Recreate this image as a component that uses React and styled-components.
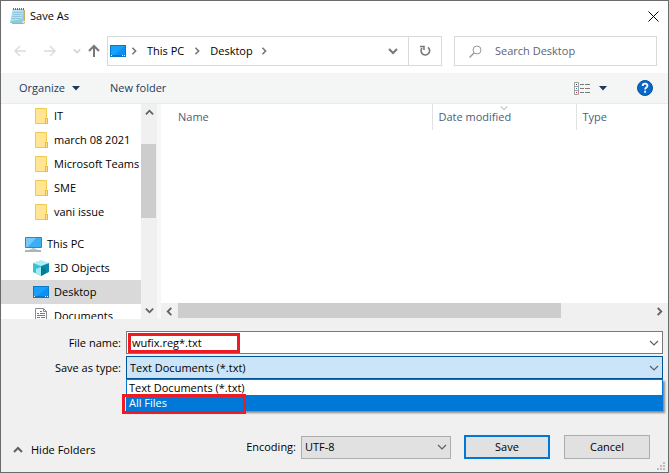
import React, { useState } from "react";
import styled, { createGlobalStyle, css } from "styled-components";

const GlobalStyle = createGlobalStyle`
  *, *::before, *::after { box-sizing: border-box; }
  body { margin: 0; }
  body, button, input, select, table {
    font-family: "Open Sans", "Noto Sans", sans-serif;
    font-size: 11px;
    line-height: 16px;
    color: #000;
  }
  button, input, select { margin: 0; padding: 0; border-radius: 0; }
  svg { flex: none; }
`;

const Dialog = styled.main`
  display: flex;
  flex-direction: column;
  height: 100vh;
  overflow: hidden;
  border: 1px solid #6b6b6b;
  background: #fff;
`;

const TitleBar = styled.header`
  display: flex;
  align-items: center;
  height: 30px;
  padding: 0 9px;
  gap: 4px;
`;

const Title = styled.h1`
  flex: 1;
  margin: 0;
  font-size: 11px;
  font-weight: 400;
`;

const IconButton = styled.button`
  display: flex;
  align-items: center;
  justify-content: center;
  flex: none;
  width: ${(p) => p.$width || 16}px;
  height: ${(p) => p.$height || 16}px;
  border: 0;
  background: transparent;
`;

const NavBar = styled.nav`
  display: flex;
  align-items: center;
  height: 42px;
  padding: 0 11px 2px 12px;
`;

const History = styled.div`
  display: flex;
  align-items: center;
  flex: none;
  width: 94px;
`;

const AddressBar = styled.div`
  display: flex;
  align-items: center;
  flex: 1;
  height: 30px;
  margin-right: 12px;
  padding-left: 2px;
  border: 1px solid #d9d9d9;
`;

const Crumb = styled.a`
  margin: 0 5px;
  color: #000;
  text-decoration: none;
  white-space: nowrap;
`;

const Spacer = styled.span`
  flex: 1;
`;

const Refresh = styled(IconButton)`
  border-left: 1px solid #d9d9d9;
`;

const SearchBox = styled.label`
  display: flex;
  align-items: center;
  flex: 0 1 203px;
  height: 30px;
  gap: 13px;
  padding-left: 14px;
  border: 1px solid #d9d9d9;
`;

const SearchInput = styled.input`
  flex: 1;
  min-width: 0;
  border: 0;
  outline: 0;
  background: transparent;
  &::placeholder { color: #5c6470; opacity: 1; }
`;

const Toolbar = styled.div`
  display: flex;
  align-items: center;
  height: 31px;
  padding: 0 15px 0 18px;
  border-bottom: 1px solid #e8eaeb;
  background: #f4f6f6;
`;

const ToolButton = styled.button`
  display: flex;
  align-items: center;
  gap: 7px;
  margin-right: 30px;
  border: 0;
  background: transparent;
  color: #1e395b;
`;

const HelpButton = styled(IconButton)`
  margin-left: 21px;
`;

const Browser = styled.section`
  display: grid;
  grid-template-columns: 140px 16px 1fr;
  flex: 1;
  min-height: 0;
`;

const Tree = styled.ul`
  margin: 0;
  padding: 0;
  overflow: hidden;
  list-style: none;
`;

const TreeItem = styled.li`
  display: flex;
  align-items: center;
  height: 24px;
  gap: 5px;
  margin-top: ${(p) => (p.$root ? 8 : 0)}px;
  padding-left: ${(p) => (p.$root ? 24 : 32)}px;
  background: ${(p) => (p.$selected ? "#d9d9d9" : "transparent")};
  white-space: nowrap;
`;

const ScrollBar = styled.div`
  display: flex;
  flex-direction: ${(p) => (p.$vertical ? "column" : "row")};
  min-height: 0;
  background: #f0f0f0;
`;

const Track = styled.div`
  display: flex;
  flex-direction: column;
  flex: 1;
  min-height: 0;
`;

const Thumb = styled.div`
  background: #cdcdcd;
  ${(p) =>
    p.$vertical
      ? css`width: 15px; height: 74px; margin-top: 23px;`
      : css`width: 81%; height: 15px;`}
`;

const Files = styled.div`
  display: flex;
  flex-direction: column;
  min-width: 0;
  border-left: 4px solid #f7f7f7;
`;

const FileTable = styled.table`
  width: 100%;
  table-layout: fixed;
  border-collapse: collapse;
`;

const Column = styled.th`
  position: relative;
  width: ${(p) => p.$width || "auto"};
  height: 26px;
  padding: 0 0 0 ${(p) => (p.$first ? 17 : 6)}px;
  border-right: ${(p) => (p.$last ? 0 : 1)}px solid #e2e2e2;
  color: #4c607a;
  font-weight: 400;
  text-align: left;
`;

const SortMark = styled.span`
  position: absolute;
  top: 0;
  left: 0;
  right: 0;
  display: flex;
  justify-content: center;
`;

const Footer = styled.form`
  position: relative;
  padding: 12px 5px 13px 1px;
  background: #f0f0f0;
`;

const Field = styled.div`
  display: grid;
  grid-template-columns: 119px 1fr;
  align-items: center;
  column-gap: 5px;
  margin-bottom: 2px;
`;

const FieldLabel = styled.label`
  text-align: right;
  white-space: nowrap;
`;

const Combo = styled.div`
  position: relative;
  display: grid;
  align-items: center;
  height: 23px;
  width: ${(p) => p.$width || "auto"};
  border: 1px solid ${(p) => p.$border};
  background: ${(p) => p.$fill};
  & > * { grid-area: 1 / 1; }
  & > svg { justify-self: end; margin-right: 3px; pointer-events: none; }
`;

const controlStyle = css`
  width: 100%;
  height: 21px;
  padding: 0 20px 0 ${(p) => p.$inset || 3}px;
  border: 0;
  outline: 0;
  appearance: none;
  background: transparent;
`;

const TextInput = styled.input`
  ${controlStyle}
`;

const Select = styled.select`
  ${controlStyle}
`;

const Options = styled.ul`
  position: absolute;
  z-index: 2;
  top: 22px;
  left: -1px;
  right: -1px;
  margin: 0;
  padding: 0;
  border: 1px solid #0078d7;
  background: #fff;
  box-shadow: 2px 2px 2px #888;
  list-style: none;
`;

const Option = styled.li`
  height: 15px;
  padding-left: 2px;
  line-height: 15px;
  background: ${(p) => (p.$active ? "#0078d7" : "#fff")};
  color: ${(p) => (p.$active ? "#fff" : "#000")};
`;

const Highlight = styled.span`
  position: absolute;
  z-index: 3;
  top: ${(p) => p.$top}px;
  left: ${(p) => p.$left}px;
  width: ${(p) => p.$width}px;
  height: 20px;
  border: 3px solid #ed1c24;
  pointer-events: none;
`;

const Actions = styled.div`
  display: flex;
  align-items: center;
  margin-top: 56px;
  padding: 0 13px 0 11px;
`;

const FoldersButton = styled.button`
  display: flex;
  align-items: center;
  gap: 8px;
  padding-top: 6px;
  border: 0;
  background: transparent;
`;

const EncodingLabel = styled.label`
  margin: 0 5px 0 auto;
`;

const PushButton = styled.button`
  width: 86px;
  height: 24px;
  margin-left: ${(p) => (p.$primary ? 13 : 14)}px;
  border: ${(p) => (p.$primary ? "2px solid #0078d7" : "1px solid #adadad")};
  background: #e1e1e1;
`;

const Grip = styled.svg`
  position: absolute;
  right: 3px;
  bottom: 2px;
`;

function Chevron({ dir = "down", size = 10, color = "#606060", weight = 2 }) {
  const paths = {
    down: "M1 3l4 4 4-4",
    up: "M1 7l4-4 4 4",
    left: "M7 1L3 5l4 4",
    right: "M3 1l4 4-4 4",
  };
  return (
    <svg width={size} height={size} viewBox="0 0 10 10" fill="none" stroke={color} strokeWidth={weight} aria-hidden="true">
      <path d={paths[dir]} />
    </svg>
  );
}

function Arrow({ dir, color }) {
  const paths = {
    left: "M13 7H2M7 2L2 7l5 5",
    right: "M1 7h11M7 2l5 5-5 5",
    up: "M7 13V2M2 7l5-5 5 5",
  };
  return (
    <svg width="14" height="14" viewBox="0 0 14 14" fill="none" stroke={color} strokeWidth={dir === "up" ? 2 : 1.5} aria-hidden="true">
      <path d={paths[dir]} />
    </svg>
  );
}

function Caret() {
  return (
    <svg width="8" height="5" viewBox="0 0 8 5" aria-hidden="true">
      <path d="M0 0h8L4 4.5z" fill="#1e395b" />
    </svg>
  );
}

function NotepadIcon() {
  return (
    <svg width="16" height="16" viewBox="0 0 16 16" aria-hidden="true">
      <path d="M3 2h12v13l-2 1H2z" fill="#c9a86a" />
      <path d="M3 1h11v11l-2 3H0z" fill="#8ecbe0" />
      <path d="M3 2h10l-1 9-11 2z" fill="#b4e2f0" />
      <path d="M3 4.500h9M2.700 6.500h9M2.400 8.500h9M2 10.500h9" stroke="#77b6cc" strokeWidth=".6" />
      <path d="M3.500 0v2M5.500 0v2M7.500 0v2M9.500 0v2M11.500 0v2M13.500 0v2" stroke="#56777f" />
      <path d="M14 12l-2 3h1l2-1z" fill="#e9f5f8" />
    </svg>
  );
}

function DesktopIcon() {
  return (
    <svg width="16" height="16" viewBox="0 0 16 16" aria-hidden="true">
      <path d="M0 2h16v12H0z" fill="#0a78c8" />
      <path d="M1 3h14v9H1z" fill="#18a0fb" />
      <path d="M15 3v9H4z" fill="#0d90f2" />
      <path d="M1 12.500h1M12 12.500h1M14 12.500h1" stroke="#fff" />
    </svg>
  );
}

function FolderIcon() {
  return (
    <svg width="16" height="16" viewBox="0 0 16 16" aria-hidden="true">
      <path d="M2.500.500h11v10h1v5h-12z" fill="#ffe594" stroke="#efc94d" />
      <path d="M12.500 10.500h2v5h-2z" fill="#ffe594" stroke="#e5b936" />
    </svg>
  );
}

function ComputerIcon() {
  return (
    <svg width="17" height="16" viewBox="0 0 17 16" aria-hidden="true">
      <path d="M.500 1.500h16v10H.500z" fill="#3daef0" stroke="#4d7f9d" />
      <path d="M1 2h10L3 11H1z" fill="#72cbfa" />
      <path d="M7 12h3v2H7z" fill="#b7cbd5" />
      <path d="M0 15h16" stroke="#9097a8" strokeWidth="1.500" />
      <path d="M5 13.500h7" stroke="#b9cbd6" />
    </svg>
  );
}

function CubeIcon() {
  return (
    <svg width="16" height="16" viewBox="0 0 16 16" aria-hidden="true">
      <path d="M0 3l8-3 8 3-8 3z" fill="#aeeef5" />
      <path d="M0 3l8 3v10l-8-4z" fill="#35c3d5" />
      <path d="M16 3L8 6v10l8-4z" fill="#078ba6" />
      <path d="M3 9l5-2v9l-5-2z" fill="#9feaf0" />
      <path d="M8 7l5 2v4l-5 3z" fill="#087995" />
    </svg>
  );
}

function DocumentIcon() {
  return (
    <svg width="16" height="16" viewBox="0 0 16 16" aria-hidden="true">
      <path d="M2.500.500h8l3 3v12h-11z" fill="#fff" stroke="#858b91" />
      <path d="M10.500.500v3h3" fill="none" stroke="#858b91" />
      <path d="M7 3.500h2M4 5.500h2M7 5.500h5M4 7.500h8M4 9.500h3M8 9.500h4M4 11.500h3M8 11.500h4M4 13.500h8" stroke="#3589d5" />
    </svg>
  );
}

function RefreshIcon() {
  return (
    <svg width="12" height="12" viewBox="0 0 12 12" fill="none" stroke="#777" strokeWidth="1.600" aria-hidden="true">
      <path d="M9 2.300A4.300 4.300 0 1 1 3 3" />
      <path d="M1 1.500h4V5" />
    </svg>
  );
}

function SearchIcon() {
  return (
    <svg width="13" height="13" viewBox="0 0 13 13" fill="none" stroke="#9a9a9a" aria-hidden="true">
      <circle cx="8" cy="5" r="4" />
      <path d="M5 8L.500 12.500" strokeWidth="1.400" />
    </svg>
  );
}

function ViewIcon() {
  return (
    <svg width="16" height="13" viewBox="0 0 16 13" fill="none" aria-hidden="true">
      <path d="M.500.500h4v12h-4zM.500 4.500h4M.500 8.500h4" fill="#fff" stroke="#a0a0a0" />
      <path d="M6 2.500h4M11 2.500h5M6 6.500h4M11 6.500h5M6 10.500h4M11 10.500h5" stroke="#7b7b7b" />
      <path d="M2 2.500h1" stroke="#444" />
      <path d="M2 6.500h1" stroke="#2f7fd0" />
      <path d="M2 10.500h1" stroke="#d01919" />
    </svg>
  );
}

function HelpIcon() {
  return (
    <svg width="16" height="16" viewBox="0 0 16 16" fill="none" aria-hidden="true">
      <circle cx="8" cy="8" r="7.500" fill="#0868c9" stroke="#07539c" />
      <path d="M5.700 6c0-3 4.800-3 4.800-.300 0 1.800-2.400 1.800-2.400 3.800M8.100 10.800v2" stroke="#fff" strokeWidth="1.800" />
    </svg>
  );
}

const folders = [
  { name: "IT", icon: FolderIcon },
  { name: "march 08 2021", icon: FolderIcon },
  { name: "Microsoft Teams", icon: FolderIcon },
  { name: "SME", icon: FolderIcon },
  { name: "vani issue", icon: FolderIcon },
  { name: "This PC", icon: ComputerIcon, root: true },
  { name: "3D Objects", icon: CubeIcon },
  { name: "Desktop", icon: DesktopIcon, selected: true },
  { name: "Documents", icon: DocumentIcon },
];

export default function App() {
  const [fileName, setFileName] = useState("wufix.reg*.txt");
  return (
    <>
      <GlobalStyle />
      <Dialog>
        <TitleBar>
          <NotepadIcon />
          <Title>Save As</Title>
          <IconButton $width={12} aria-label="Close">
            <svg width="11" height="11" viewBox="0 0 11 11" stroke="#000" aria-hidden="true">
              <path d="M.500.500l10 10M10.500.500l-10 10" />
            </svg>
          </IconButton>
        </TitleBar>
        <NavBar>
          <History>
            <IconButton $width={14} aria-label="Back"><Arrow dir="left" color="#dcdcdc" /></IconButton>
            <IconButton $width={46} aria-label="Forward"><Arrow dir="right" color="#dcdcdc" /></IconButton>
            <IconButton $width={8} aria-label="Recent locations"><Chevron size={8} color="#d4d4d4" /></IconButton>
            <IconButton $width={26} aria-label="Up"><Arrow dir="up" color="#777" /></IconButton>
          </History>
          <AddressBar>
            <DesktopIcon />
            <IconButton $width={16} aria-label="Locations"><Chevron dir="right" size={8} color="#777" /></IconButton>
            <Crumb href="#this-pc">This PC</Crumb>
            <IconButton aria-label="This PC folders"><Chevron dir="right" size={8} color="#777" /></IconButton>
            <Crumb href="#desktop">Desktop</Crumb>
            <IconButton $width={12} aria-label="Desktop folders"><Chevron dir="right" size={8} color="#777" /></IconButton>
            <Spacer />
            <IconButton $width={30} $height={28} aria-label="Previous locations"><Chevron color="#777" /></IconButton>
            <Refresh $width={33} $height={28} aria-label="Refresh"><RefreshIcon /></Refresh>
          </AddressBar>
          <SearchBox>
            <SearchIcon />
            <SearchInput type="search" placeholder="Search Desktop" aria-label="Search Desktop" />
          </SearchBox>
        </NavBar>
        <Toolbar>
          <ToolButton>Organize <Caret /></ToolButton>
          <ToolButton>New folder</ToolButton>
          <Spacer />
          <IconButton aria-label="Change view"><ViewIcon /></IconButton>
          <IconButton $width={26} aria-label="View options"><Caret /></IconButton>
          <HelpButton aria-label="Help"><HelpIcon /></HelpButton>
        </Toolbar>
        <Browser>
          <Tree>
            {folders.map(({ name, icon: Icon, root, selected }) => (
              <TreeItem key={name} $root={root} $selected={selected}><Icon />{name}</TreeItem>
            ))}
          </Tree>
          <ScrollBar $vertical>
            <IconButton $height={17} aria-label="Scroll up"><Chevron dir="up" size={9} /></IconButton>
            <Track><Thumb $vertical /></Track>
            <IconButton $height={17} aria-label="Scroll down"><Chevron size={9} /></IconButton>
          </ScrollBar>
          <Files>
            <FileTable>
              <thead>
                <tr>
                  <Column $first>Name</Column>
                  <Column $width="144px">Date modified<SortMark><Chevron size={8} color="#888" weight={1} /></SortMark></Column>
                  <Column $last $width="92px">Type</Column>
                </tr>
              </thead>
            </FileTable>
            <Spacer />
            <ScrollBar>
              <IconButton $width={17} aria-label="Scroll left"><Chevron dir="left" size={9} /></IconButton>
              <Track><Thumb /></Track>
              <IconButton $width={17} aria-label="Scroll right"><Chevron dir="right" size={9} /></IconButton>
            </ScrollBar>
          </Files>
        </Browser>
        <Footer onSubmit={(e) => e.preventDefault()}>
          <Field>
            <FieldLabel htmlFor="file-name">File name:</FieldLabel>
            <Combo $border="#7a7a7a" $fill="#fff">
              <TextInput id="file-name" $inset={5} value={fileName} onChange={(e) => setFileName(e.target.value)} />
              <Chevron weight={1.2} />
              <Highlight $top={1} $left={1} $width={112} />
            </Combo>
          </Field>
          <Field>
            <FieldLabel htmlFor="file-type">Save as type:</FieldLabel>
            <Combo $border="#005499" $fill="#cce4f7">
              <Select id="file-type" defaultValue="txt">
                <option value="txt">Text Documents (*.txt)</option>
                <option value="all">All Files</option>
              </Select>
              <Chevron weight={1.2} />
              <Options role="listbox" aria-label="Save as type">
                <Option role="option" aria-selected="false">Text Documents (*.txt)</Option>
                <Option role="option" aria-selected="true" $active>All Files</Option>
              </Options>
              <Highlight $top={37} $left={-5} $width={124} />
            </Combo>
          </Field>
          <Actions>
            <FoldersButton type="button"><Chevron dir="up" />Hide Folders</FoldersButton>
            <EncodingLabel htmlFor="encoding">Encoding:</EncodingLabel>
            <Combo $width="150px" $border="#adadad" $fill="#e1e1e1">
              <Select id="encoding" defaultValue="utf8">
                <option value="utf8">UTF-8</option>
              </Select>
              <Chevron weight={1.2} />
            </Combo>
            <PushButton type="submit" $primary>Save</PushButton>
            <PushButton type="button">Cancel</PushButton>
          </Actions>
          <Grip width="8" height="8" viewBox="0 0 8 8" fill="#bdbdbd" aria-hidden="true">
            <path d="M6 0h2v2H6zM3 3h2v2H3zM6 3h2v2H6zM0 6h2v2H0zM3 6h2v2H3zM6 6h2v2H6z" />
          </Grip>
        </Footer>
      </Dialog>
    </>
  );
}
